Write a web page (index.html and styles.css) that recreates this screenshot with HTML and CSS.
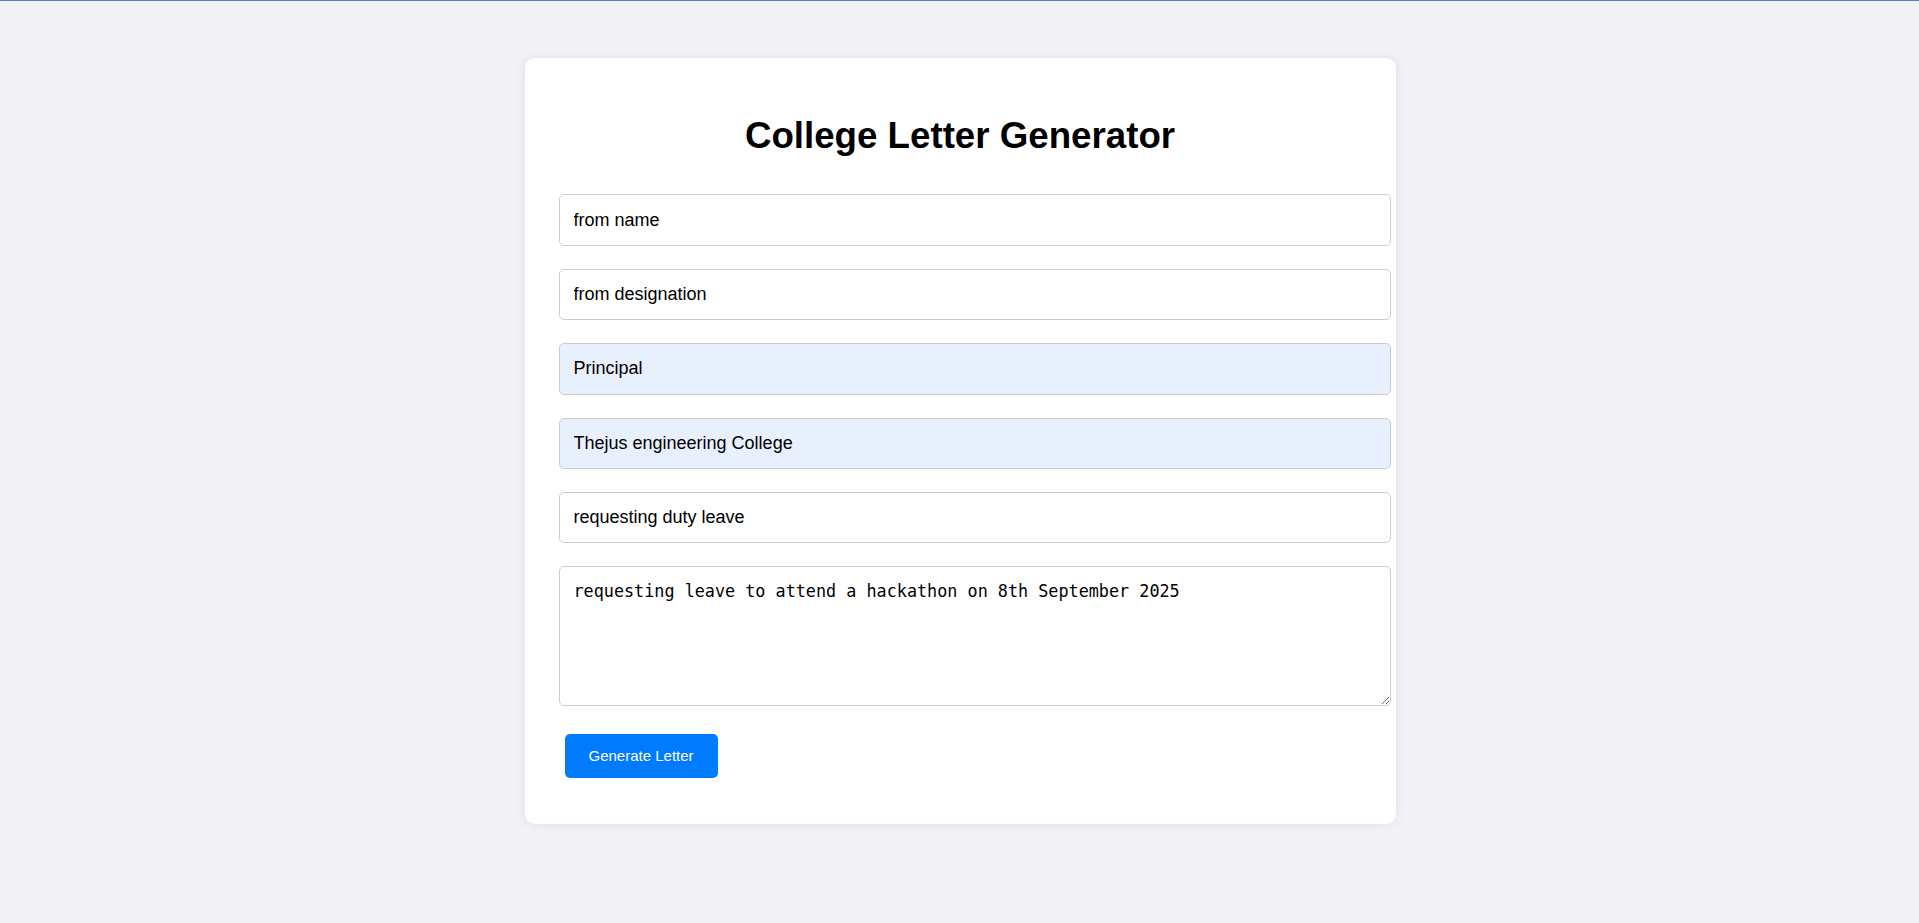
FILE: index.html
```html
<!DOCTYPE html>
<html lang="en">
<head>
<meta charset="utf-8">
<title>College Letter Generator</title>
<link rel="stylesheet" href="styles.css">
</head>
<body>
<div class="topline"></div>
<main class="page">
  <section class="card">
    <h1 class="title">College Letter Generator</h1>
    <form class="form">
      <input class="field" type="text" value="from name">
      <input class="field" type="text" value="from designation">
      <input class="field autofill" type="text" value="Principal">
      <input class="field autofill" type="text" value="Thejus engineering College">
      <input class="field" type="text" value="requesting duty leave">
      <textarea class="field area">requesting leave to attend a hackathon on 8th September 2025</textarea>
      <button class="btn" type="button">Generate Letter</button>
    </form>
  </section>
</main>
</body>
</html>
```
FILE: styles.css
```css
html, body {
  margin: 0;
  padding: 0;
}
body {
  background: #f3f3f7;
  font-family: "Liberation Sans", Arial, sans-serif;
  color: #000;
  min-height: 923px;
}
.topline {
  height: 1px;
  background: #4a7fc4;
}
.page {
  display: flex;
  justify-content: center;
  padding-top: 57px;
}
.card {
  width: 803px;
  padding: 34px 34px 46px;
  background: #fff;
  border-radius: 10px;
  box-shadow: 0 0 12px rgba(0, 0, 0, 0.09);
  margin-left: 1px;
}
.title {
  margin: 23px 0 38px;
  text-align: center;
  font-size: 36.7px;
  font-weight: bold;
  line-height: 41.4px;
}
.form {
  display: flex;
  flex-direction: column;
  align-items: flex-start;
}
.field {
  display: block;
  width: calc(100% - 1px);
  box-sizing: content-box;
  margin: 0 0 23px;
  padding: 14px;
  border: 1px solid #ccc;
  border-radius: 5px;
  font-family: "Liberation Sans", Arial, sans-serif;
  font-size: 18px;
  line-height: 21.4px;
  height: 21.4px;
  color: #000;
  background: #fff;
  outline: none;
}
.autofill {
  background: #e8f0fe;
}
.area {
  height: 109.4px;
  font-family: "DejaVu Sans Mono", "Liberation Mono", monospace;
  font-size: 16.8px;
  line-height: 21px;
  resize: both;
}
.btn {
  margin: 5px 6px 0;
  height: 44px;
  padding: 0 24px;
  border: none;
  border-radius: 5px;
  background: #007bff;
  color: #fff;
  font-family: "Liberation Sans", Arial, sans-serif;
  font-size: 15px;
  cursor: pointer;
}
```
